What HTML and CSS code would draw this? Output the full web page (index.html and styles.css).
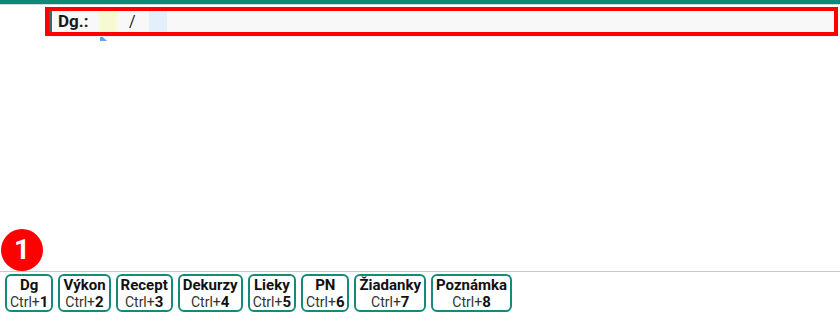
FILE: index.html
```html
<!DOCTYPE html>
<html>
<head>
<meta charset="utf-8">
<link rel="stylesheet" href="styles.css">
</head>
<body>
<div class="app">
  <div class="topbar"></div>
  <div class="content">
    <div class="dg-wrap">
      <div class="dg-panel">
        <span class="dg-label">Dg.:</span>
        <span class="field field-yellow"></span>
        <span class="slash">/</span>
        <span class="field field-blue"></span>
      </div>
      <span class="caret"></span>
    </div>
  </div>
  <div class="footer">
    <span class="badge">1</span>
    <div class="btn"><span class="name">Dg</span><span class="key">Ctrl+<b>1</b></span></div>
    <div class="btn"><span class="name">Výkon</span><span class="key">Ctrl+<b>2</b></span></div>
    <div class="btn"><span class="name">Recept</span><span class="key">Ctrl+<b>3</b></span></div>
    <div class="btn"><span class="name">Dekurzy</span><span class="key">Ctrl+<b>4</b></span></div>
    <div class="btn"><span class="name">Lieky</span><span class="key">Ctrl+<b>5</b></span></div>
    <div class="btn"><span class="name">PN</span><span class="key">Ctrl+<b>6</b></span></div>
    <div class="btn"><span class="name">Žiadanky</span><span class="key">Ctrl+<b>7</b></span></div>
    <div class="btn"><span class="name">Poznámka</span><span class="key">Ctrl+<b>8</b></span></div>
  </div>
</div>
</body>
</html>
```

FILE: styles.css
```css
html, body {
  margin: 0;
  padding: 0;
  background: #fff;
}
body {
  font-family: Roboto, "Liberation Sans", sans-serif;
  color: #111;
}
.app {
  height: 313px;
  display: flex;
  flex-direction: column;
  overflow: hidden;
}
.topbar {
  height: 4px;
  background: #0b8a78;
  border-bottom: 1px solid #d8d8d8;
  flex: none;
}
.content {
  flex: 1;
  padding: 6px 6px 0 49px;
}
.dg-wrap {
  position: relative;
}
.dg-panel {
  height: 21px;
  background: #f8f8f8;
  border-left: 3px solid #2f6e66;
  outline: 4px solid #ff0000;
  box-shadow: 0 2px 5px rgba(0,0,0,0.25);
  display: flex;
  align-items: stretch;
  padding-left: 6px;
}
.dg-label {
  font-weight: 700;
  font-size: 17px;
  line-height: 21px;
  width: 41px;
  color: #1a1a1a;
}
.field {
  width: 18px;
}
.field-yellow {
  background: #f7f9d2;
}
.field-blue {
  background: #e3f0fb;
}
.slash {
  font-size: 16px;
  line-height: 21px;
  padding: 0 13px 0 12px;
  color: #222;
}
.caret {
  position: absolute;
  left: 51px;
  top: 26px;
  width: 7px;
  height: 4px;
  background: #5aa8e8;
  clip-path: polygon(0 0, 40% 0, 100% 100%, 0 100%);
}
.footer {
  position: relative;
  flex: none;
  border-top: 1px solid #c8c8c8;
  padding: 2px 0 1px 5px;
  height: 38px;
  display: flex;
  gap: 5px;
  align-items: flex-start;
}
.badge {
  position: absolute;
  left: 1px;
  top: -43px;
  width: 42px;
  height: 42px;
  border-radius: 50%;
  background: #ff0000;
  color: #fff;
  font-weight: 700;
  font-size: 28px;
  line-height: 42px;
  text-align: center;
}
.btn {
  box-sizing: border-box;
  border: 2px solid #17897a;
  border-radius: 6px;
  padding: 0 3px;
  height: 38px;
  display: flex;
  flex-direction: column;
  align-items: center;
  justify-content: center;
  min-width: 48px;
}
.name {
  font-weight: 700;
  font-size: 15px;
  line-height: 18px;
  color: #111;
}
.key {
  font-size: 14px;
  line-height: 17px;
  color: #333;
}
.key b {
  font-weight: 700;
  font-size: 15px;
  color: #111;
}
```
